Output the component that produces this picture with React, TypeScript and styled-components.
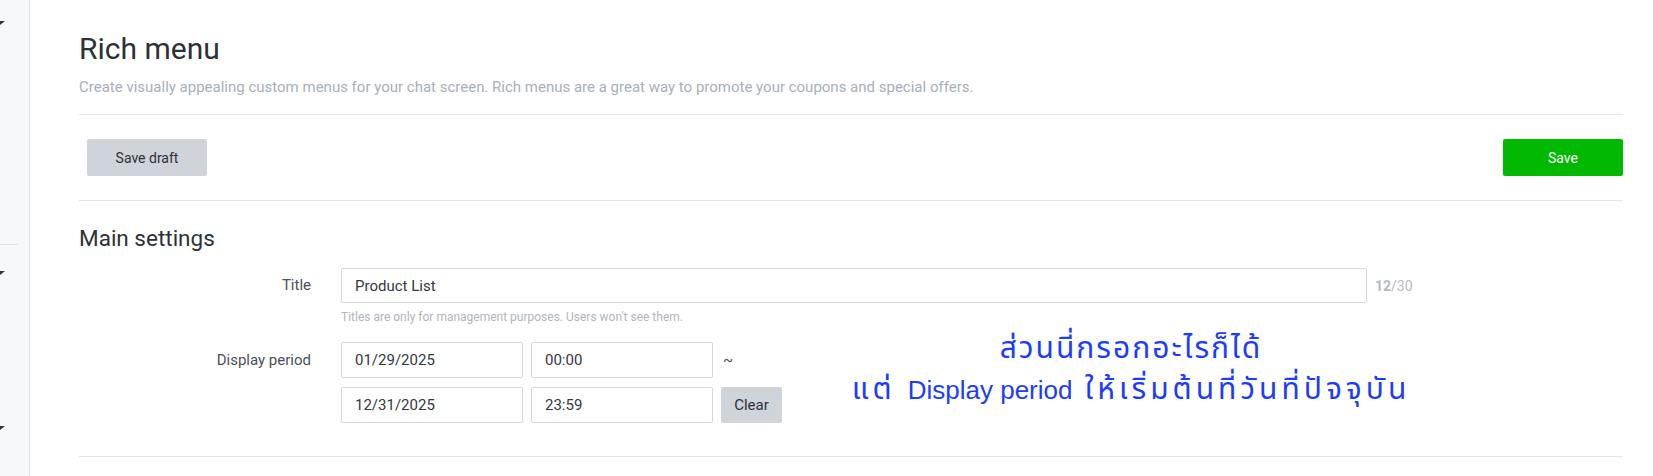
import { FC } from 'react';
import styled, { createGlobalStyle } from 'styled-components';

const GlobalStyle = createGlobalStyle`
	html, body {
		margin: 0;
		padding: 0;
		background: #ffffff;
	}
	body {
		font-family: Roboto, 'Liberation Sans', sans-serif;
		color: #2c3138;
	}
`;

const StyledRoot = styled.div`
	display: flex;
	width: 1653px;
	height: 476px;
	overflow: hidden;
`;

const StyledSidebar = styled.aside`
	width: 29px;
	flex-shrink: 0;
	background-color: #f7f8fa;
	border-right: 1px solid #dfe2e6;
	display: flex;
	flex-direction: column;
`;

const StyledCaret = styled.div<{ top: number }>`
	height: 4px;
	margin-top: ${({ top }) => top}px;
	display: flex;
`;

const StyledSideRule = styled.div`
	width: 18px;
	height: 1px;
	margin-top: 219px;
	background-color: #e1e4e8;
`;

const StyledMain = styled.main`
	flex: 1;
	padding: 31px 30px 0 49px;
	position: relative;
`;

const StyledHeading = styled.h1`
	margin: 0;
	font-size: 30px;
	line-height: 36px;
	font-weight: 400;
	color: #2c3138;
`;

const StyledLead = styled.p`
	margin: 10px 0 0;
	font-size: 15px;
	line-height: 20px;
	color: #a9afb7;
`;

const StyledRule = styled.hr<{ gap: number }>`
	margin: ${({ gap }) => gap}px 0 0;
	border: 0;
	border-top: 1px solid #e4e6ea;
`;

const StyledToolbar = styled.div`
	display: flex;
	justify-content: space-between;
	align-items: center;
	padding: 24px 0 24px 8px;
`;

const StyledButton = styled.button<{ accent?: boolean }>`
	display: flex;
	justify-content: center;
	align-items: center;
	width: 120px;
	height: 37px;
	border: 0;
	border-radius: 2px;
	font-family: Roboto, 'Liberation Sans', sans-serif;
	font-size: 14px;
	font-weight: 400;
	cursor: pointer;
	color: ${({ accent }) => (accent ? '#ffffff' : '#2c3138')};
	background-color: ${({ accent }) => (accent ? '#00b900' : '#cfd3da')};
`;

const StyledSectionTitle = styled.h2`
	margin: 23px 0 0;
	font-size: 22.5px;
	line-height: 28px;
	font-weight: 400;
	color: #2c3138;
`;

const StyledForm = styled.div`
	display: flex;
	flex-direction: column;
	margin-top: 16px;
	padding-bottom: 33px;
`;

const StyledRow = styled.div<{ gap?: number }>`
	display: grid;
	grid-template-columns: 232px 1fr;
	column-gap: 30px;
	margin-top: ${({ gap }) => gap ?? 0}px;
`;

const StyledLabel = styled.div<{ height?: number }>`
	text-align: right;
	font-size: 15px;
	line-height: ${({ height }) => height ?? 36}px;
	color: #4a5058;
`;

const StyledField = styled.div`
	display: flex;
	flex-direction: column;
`;

const StyledInline = styled.div`
	display: flex;
	align-items: center;
	gap: 8px;
`;

const StyledInput = styled.div<{ width?: number; height?: number }>`
	box-sizing: border-box;
	width: ${({ width }) => (width ? `${width}px` : 'auto')};
	height: ${({ height }) => height ?? 36}px;
	padding: 0 13px;
	display: flex;
	align-items: center;
	border: 1px solid #d3d8de;
	border-radius: 2px;
	font-size: 15px;
	color: #33383e;
	background: #ffffff;
`;

const StyledCounter = styled.span`
	font-size: 14px;
	color: #b5bac2;

	b {
		font-weight: 700;
	}
`;

const StyledHint = styled.div`
	margin-top: 6px;
	font-size: 12px;
	line-height: 16px;
	color: #b0b5bd;
`;

const StyledPeriod = styled.div`
	display: flex;
	flex-direction: column;
	gap: 9px;
`;

const StyledTilde = styled.span`
	margin-left: 2px;
	font-size: 15px;
	color: #4a5058;
`;

const StyledSmallButton = styled.button`
	height: 36px;
	width: 61px;
	border: 0;
	border-radius: 2px;
	background-color: #cfd3da;
	font-family: Roboto, 'Liberation Sans', sans-serif;
	font-size: 15px;
	color: #2c3138;
	cursor: pointer;
`;

// note pasted over the screenshot
const StyledNote = styled.div`
	position: absolute;
	left: 1101px;
	top: 328px;
	transform: translateX(-50%);
	white-space: nowrap;
	text-align: center;
	font-family: 'Liberation Sans', 'Noto Sans Thai', 'Noto Sans', sans-serif;
	font-size: 26px;
	line-height: 40px;
	color: #1a3cff;
`;

const StyledNoteLine = styled.div<{ wordGap?: number }>`
	word-spacing: ${({ wordGap }) => wordGap ?? 0}px;
`;

const StyledLatin = styled.span`
	word-spacing: 0;
`;

const StyledThai = styled.span<{ spacing?: number }>`
	font-size: 30px;
	word-spacing: 0;
	letter-spacing: ${({ spacing }) => spacing ?? 2}px;
`;

const Caret: FC<{ top: number }> = ({ top }) => (
	<StyledCaret top={top}>
		<svg width="5" height="4" viewBox="0 0 5 4">
			<polygon points="-4,0 5,0 0,4" fill="#2f343a" />
		</svg>
	</StyledCaret>
);

const periods = [
	{ date: '01/29/2025', time: '00:00', end: false },
	{ date: '12/31/2025', time: '23:59', end: true },
];

const App: FC = () => {
	return (
		<>
			<GlobalStyle />
			<StyledRoot>
				<StyledSidebar>
					<Caret top={21} />
					<StyledSideRule />
					<Caret top={26} />
					<Caret top={151} />
				</StyledSidebar>

				<StyledMain>
					<StyledHeading>Rich menu</StyledHeading>
					<StyledLead>
						Create visually appealing custom menus for your chat screen. Rich menus are a great way to promote your
						coupons and special offers.
					</StyledLead>
					<StyledRule gap={17} />

					<StyledToolbar>
						<StyledButton>Save draft</StyledButton>
						<StyledButton accent>Save</StyledButton>
					</StyledToolbar>
					<StyledRule gap={0} />

					<StyledSectionTitle>Main settings</StyledSectionTitle>

					<StyledForm>
						<StyledRow>
							<StyledLabel height={35}>Title</StyledLabel>
							<StyledField>
								<StyledInline>
									<StyledInput width={1026} height={35}>
										Product List
									</StyledInput>
									<StyledCounter>
										<b>12</b>/30
									</StyledCounter>
								</StyledInline>
								<StyledHint>Titles are only for management purposes. Users won't see them.</StyledHint>
							</StyledField>
						</StyledRow>

						<StyledRow gap={17}>
							<StyledLabel>Display period</StyledLabel>
							<StyledPeriod>
								{periods.map((period) => (
									<StyledInline key={period.date}>
										<StyledInput width={182}>{period.date}</StyledInput>
										<StyledInput width={182}>{period.time}</StyledInput>
										{period.end ? <StyledSmallButton>Clear</StyledSmallButton> : <StyledTilde>~</StyledTilde>}
									</StyledInline>
								))}
							</StyledPeriod>
						</StyledRow>
					</StyledForm>
					<StyledRule gap={0} />

					<StyledNote>
						<StyledNoteLine>
							<StyledThai>ส่วนนี่กรอกอะไรก็ได้</StyledThai>
						</StyledNoteLine>
						<StyledNoteLine wordGap={5}>
							<StyledThai spacing={4}>แต่</StyledThai> <StyledLatin>Display period</StyledLatin>{' '}
							<StyledThai spacing={4}>ให้เริ่มต้นที่วันที่ปัจจุบัน</StyledThai>
						</StyledNoteLine>
					</StyledNote>
				</StyledMain>
			</StyledRoot>
		</>
	);
};

export default App;
